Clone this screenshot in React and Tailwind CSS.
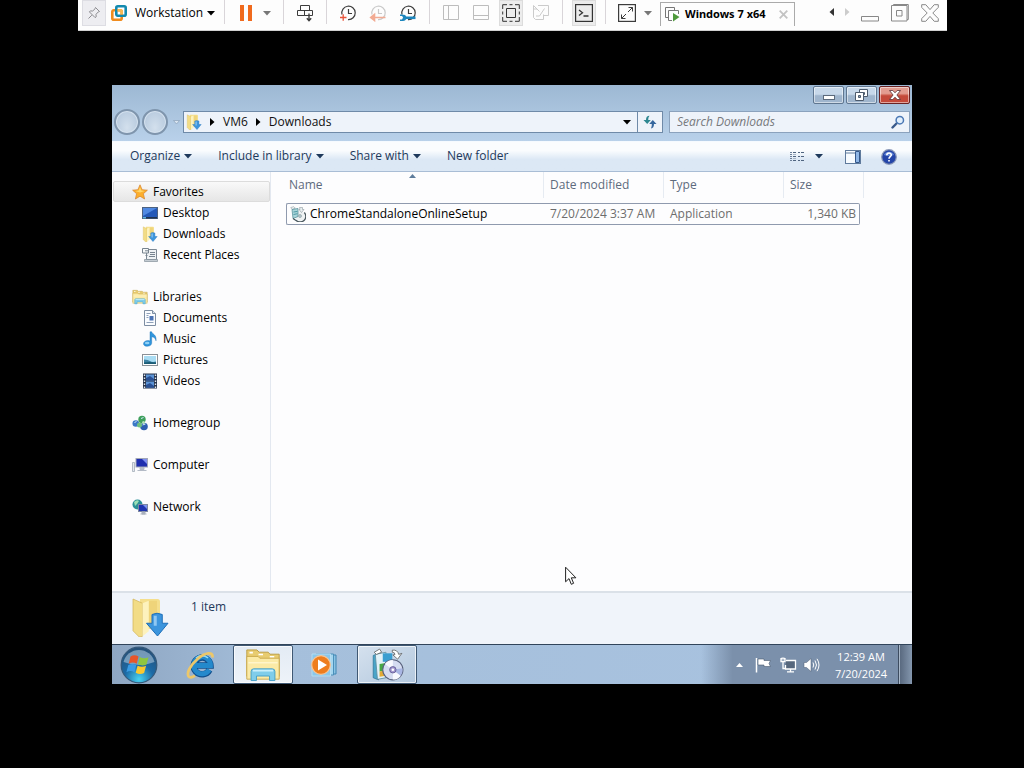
import { useState } from 'react'
import clsx from 'clsx'

const UI_FONT = 'font-["Open_Sans","Noto_Sans",sans-serif]'

function Caret ({ className = 'fill-black' }) {
  return (
    <svg width="8" height="5" viewBox="0 0 8 5" className={clsx('shrink-0', className)} aria-hidden>
      <path d="M0 0h8L4 4.5z" />
    </svg>
  )
}

function RightArrow () {
  return (
    <svg width="5" height="8" viewBox="0 0 5 8" className="shrink-0 fill-black" aria-hidden>
      <path d="M0 0v8l4.5-4z" />
    </svg>
  )
}

/* ---------- host toolbar ---------- */

function Sep () {
  return <span className="mx-1.5 h-6 w-px shrink-0 bg-[#d9d5d9]" />
}

function ToolButton ({ label, active, children }) {
  return (
    <button type="button" aria-label={label} className="flex h-[26px] w-[30px] shrink-0 items-center justify-center">
      <span
        className={clsx(
          'flex h-[26px] w-6 items-center justify-center',
          active && 'border border-[#dcdcdc] bg-[#ececec]'
        )}
      >
        {children}
      </span>
    </button>
  )
}

function LineIcon ({ w = 18, h = 18, stroke = '#3c3c3c', children }) {
  return (
    <svg width={w} height={h} viewBox={`0 0 ${w} ${h}`} fill="none" stroke={stroke} className="shrink-0" aria-hidden>
      {children}
    </svg>
  )
}

function ClockFace ({ stroke }) {
  return (
    <g stroke={stroke}>
      <path d="M3 10.500A6.700 6.700 0 1 1 9 15.600" strokeWidth="1.200" />
      <path d="M9.500 5v4.500H13" strokeWidth="1.200" />
    </g>
  )
}

function HostToolbar () {
  return (
    <header className="mr-[77px] ml-[78px] flex h-[31px] items-start border-b border-[#d0d0d0] bg-[#fdfdfd] pr-0.5 pl-1 text-xs text-black">
      <button type="button" aria-label="Pin toolbar" className="flex h-[26px] w-6 shrink-0 items-center justify-center border border-[#dddde3] bg-[#ededf1]">
        <LineIcon w={14} h={14} stroke="#8c8c90">
          <path d="M8.500 1.500l4 4-1.200.4-2.300 2.400.2 2.500-1.100.8-5.700-5.700.9-1 2.400.1 2.400-2.300zM4.800 9.200L1.500 12.500" />
        </LineIcon>
      </button>
      <button type="button" className="flex h-[26px] w-28 shrink-0 items-center pr-[3px] pl-[5px]">
        <svg width="16" height="16" viewBox="0 0 16 16" fill="none" strokeWidth="2.600" className="mr-2 shrink-0" aria-hidden>
          <rect x="1.300" y="5.300" width="9.400" height="9.400" rx="1.500" stroke="#f08c1e" />
          <rect x="5.300" y="1.300" width="9.400" height="9.400" rx="1.500" stroke="#1289ae" />
          <path d="M6.500 5.300h2.700q1.500 0 1.500 1.500v2.600" stroke="#f7b955" />
        </svg>
        <span>Workstation</span>
        <Caret className="ml-auto fill-black" />
      </button>
      <Sep />
      <ToolButton label="Pause">
        <span className="flex gap-1">
          <span className="h-4 w-1 bg-[#f06a1d]" />
          <span className="h-4 w-1 bg-[#f06a1d]" />
        </span>
      </ToolButton>
      <button type="button" aria-label="Power options" className="flex h-[26px] w-4 shrink-0 items-center pl-0.5">
        <Caret className="fill-[#777]" />
      </button>
      <Sep />
      <ToolButton label="Send Ctrl+Alt+Del">
        <LineIcon>
          <path d="M4.500 1.500h9v5h-9zM1.500 6.500h7v5h-7zM8.500 6.500h8v5h-8z" />
          <path d="M13 9.500v7M10.800 14.200L13 16.600l2.200-2.400" strokeWidth="1.400" />
        </LineIcon>
      </ToolButton>
      <Sep />
      <ToolButton label="Take snapshot">
        <LineIcon>
          <ClockFace stroke="#3c3c3c" />
          <path d="M1 13.500h6.500M4.200 10.200v6.600" stroke="#e8543a" strokeWidth="1.300" />
        </LineIcon>
      </ToolButton>
      <ToolButton label="Revert snapshot">
        <LineIcon>
          <ClockFace stroke="#c9c9c9" />
          <path d="M2 13.500h14.500M5.500 10.500l-3.800 3 3.800 3z" fill="#f2ab93" stroke="#f2ab93" strokeWidth="1.600" />
        </LineIcon>
      </ToolButton>
      <ToolButton label="Manage snapshots">
        <LineIcon>
          <ClockFace stroke="#3c3c3c" />
          <path d="M6 13.800h10.500" stroke="#1d86bd" strokeWidth="2.600" />
          <path d="M1 11.200h2.500l1.500 2.500-1.500 2.500H1M3.500 11.200q3 0 3 2.600t-3 2.400" stroke="#1d86bd" strokeWidth="1.600" />
        </LineIcon>
      </ToolButton>
      <Sep />
      <ToolButton label="Show library">
        <LineIcon stroke="#bdbdbd">
          <path d="M1.500 1.500h15v14h-15zM6.500 1.500v14" />
        </LineIcon>
      </ToolButton>
      <ToolButton label="Show thumbnail bar">
        <LineIcon stroke="#bdbdbd">
          <path d="M1.500 1.500h15v14h-15zM1.500 11.500h15" />
        </LineIcon>
      </ToolButton>
      <ToolButton label="Full screen" active>
        <LineIcon stroke="#333">
          <path d="M4.500 4.500h9v9h-9zM.7 5V.7H5M7.500.7h3M13 .7h4.300V5M17.300 7.500v3M17.300 13v4.300H13M10.500 17.300h-3M5 17.300H.7V13M.7 10.500v-3" />
        </LineIcon>
      </ToolButton>
      <ToolButton label="Unity">
        <LineIcon stroke="#cbcbcb">
          <path d="M6 1.500h10.500v10H12M1.500 5v8.500l2 2h8v-5M1.500 1.500v3.500H5M1.500 1.500l6 6M12.500 4.500L7.500 12H4" />
        </LineIcon>
      </ToolButton>
      <Sep />
      <ToolButton label="Console view" active>
        <LineIcon stroke="#333">
          <rect x="0.600" y="0.600" width="16.800" height="16.800" strokeWidth="1.200" />
          <path d="M4 6l3.500 2.700L4 11.400M8.500 12h5" strokeWidth="1.300" />
        </LineIcon>
      </ToolButton>
      <Sep />
      <ToolButton label="Stretch guest">
        <LineIcon>
          <rect x="0.600" y="0.600" width="16.800" height="16.800" strokeWidth="1.200" />
          <path d="M10 8l4.500-4.500M10.500 3.500h4v4M8 10l-4.500 4.500M3.500 10.500v4h4" />
        </LineIcon>
      </ToolButton>
      <button type="button" aria-label="Stretch options" className="flex h-[26px] w-3 shrink-0 items-center justify-center">
        <Caret className="fill-[#777]" />
      </button>

      <div className="mt-0.5 ml-1.5 flex h-6 w-[135px] shrink-0 items-center border-x border-t border-[#aaa] pl-1">
        <svg width="15" height="15" viewBox="0 0 15 15" fill="none" stroke="#777" className="mr-[5px] shrink-0" aria-hidden>
          <path d="M3 10.500H.5V.5h9V3" />
          <path d="M7 13.500H3.500v-10h10V7" fill="#fff" />
          <path d="M8 6v8.500L14.500 10z" fill="#4f9a3c" stroke="none" />
        </svg>
        <span className="font-['Noto_Sans'] text-[11px] font-bold whitespace-nowrap">Windows 7 x64</span>
        <button type="button" aria-label="Close tab" className="mr-1.5 ml-auto">
          <svg width="9" height="9" viewBox="0 0 9 9" stroke="#c3c3c3" strokeWidth="1.800" aria-hidden>
            <path d="M.7.7l7.600 7.600M8.300.7L.7 8.300" />
          </svg>
        </button>
      </div>

      <div className="ml-auto flex shrink-0">
        <button type="button" aria-label="Previous tab" className="flex h-6 w-4 items-center justify-center">
          <svg width="5" height="8" viewBox="0 0 5 8" fill="#333" aria-hidden><path d="M5 0v8L.5 4z" /></svg>
        </button>
        <button type="button" aria-label="Next tab" className="flex h-6 w-4 items-center justify-center">
          <svg width="5" height="8" viewBox="0 0 5 8" fill="#ccc" aria-hidden><path d="M0 0v8l4.500-4z" /></svg>
        </button>
        <ToolButton label="Minimize">
          <LineIcon stroke="#888"><path d="M.5 12.500h17v4.500H.5z" /></LineIcon>
        </ToolButton>
        <ToolButton label="Restore">
          <LineIcon stroke="#888"><path d="M.5 1.500h15.500v15.500H.5zM2.500 1V.5h14.800V15.500H16M5.500 6.500h5.500v5.500H5.500z" /></LineIcon>
        </ToolButton>
        <ToolButton label="Close">
          <LineIcon stroke="#888">
            <path d="M.7.7h4.100L9 5.600 13.200.7h4.100v2.700L11.800 9l5.500 5.600v2.700h-4.100L9 12.400l-4.200 4.900H.7v-2.700L6.200 9 .7 3.400z" />
          </LineIcon>
        </ToolButton>
      </div>
    </header>
  )
}

/* ---------- icons used inside the guest ---------- */

function DownloadFolderIcon ({ size = 16 }) {
  return (
    <svg width={size} height={size} viewBox="0 0 16 16" className="shrink-0" aria-hidden>
      <path d="M4 .8h7q1 0 1 1v11H4z" fill="#f5df8d" />
      <path d="M7.500 1.500h3.300V12H7.500z" fill="#efd47a" />
      <path d="M1.200.8L5 2.500v13.200L3.700 16 1.200 13.500z" fill="#f2dc86" stroke="#d3b55c" strokeWidth=".3" />
      <path d="M5 2.500l2.500-1v12.200L5 15.700z" fill="#fdf2bd" />
      <path d="M8.800 7q2-1 4.100 0v3.500h2.300L11 15.600 6.600 10.500h2.200z" fill="#3c95dd" stroke="#1f6fb8" strokeWidth=".4" />
      <path d="M9.500 7.500h1.200v4H9.500z" fill="#8fc8f3" />
    </svg>
  )
}

function LibraryIcon ({ size = 16 }) {
  return (
    <svg width={size} height={size} viewBox="0 0 16 16" className="shrink-0" aria-hidden>
      <path d="M.8 3.500V1.300h4.500l1 1h4l.8.900h4.100V13H.8z" fill="#e8cc70" stroke="#b9983c" strokeWidth=".4" />
      <path d="M2 2.500h1.500M6 3.300h2M11 4.300h2" stroke="#fff" strokeWidth=".7" />
      <path d="M.8 4.200h5l.8.800h8.600v9.300H.8z" fill="#fbeaa6" stroke="#c9a94d" strokeWidth=".4" />
      <path d="M1.500 7h13" stroke="#fff6cf" strokeWidth=".6" />
      <path d="M2.700 14.900v-4q0-1.200 1.200-1.200h8.200q1.200 0 1.200 1.200v4h-2.400v-2H5.100v2z" fill="#7fcdea" stroke="#3f9cc4" strokeWidth=".4" />
      <path d="M3.500 10.500h9" stroke="#c9effb" strokeWidth=".8" />
    </svg>
  )
}

function InstallerIcon ({ size = 16 }) {
  return (
    <svg width={size} height={size} viewBox="0 0 32 32" className="shrink-0" aria-hidden>
      <path d="M3 7l5-2v25l-5-2z" fill="#4aa5c9" stroke="#286d8d" strokeWidth=".6" />
      <path d="M5 6l10-2v24l-8 1.500z" fill="#e3f2f8" stroke="#5e8ea1" strokeWidth=".8" />
      <path d="M9 15l6-1v7l-6 1z" fill="#47a845" />
      <path d="M9 22l6-1v5l-6 1z" fill="#e3aa34" />
      <path d="M12 5h9v8h-9z" fill="#3a9ed0" />
      <path d="M21 2q5-.500 6 4l3-1-4 5.500-4.500-4 2-.3Q23.500 4 21 4zM4 4l5-3 2 3-5 2z" fill="#fff" stroke="#555" strokeWidth=".7" />
      <circle cx="21.500" cy="20.500" r="9.500" fill="#d5dcf1" stroke="#59617c" />
      <path d="M21.500 20.500L14 15a9 9 0 0 1 7.500-3.700zM21.500 20.500l7.500 5.500a9 9 0 0 1-7.500 3.700z" fill="#f8f9ff" />
      <path d="M21.500 20.500l9-1.500a9 9 0 0 1-1.500 7z" fill="#a9b6e4" />
      <circle cx="21.500" cy="20.500" r="3" fill="#a599cf" stroke="#5c5792" strokeWidth=".8" />
      <circle cx="21.500" cy="20.500" r="1.200" fill="#fff" />
    </svg>
  )
}

function Svg16 ({ children }) {
  return <svg width="16" height="16" viewBox="0 0 16 16" className="shrink-0" aria-hidden>{children}</svg>
}

// The 16px variant is a simpler drawing: pale disc behind a teal box, dark rim at the lower right
function SmallInstallerIcon () {
  return (
    <Svg16>
      <path d="M.8 1.500l3-.8 1.500 1.500L2 3.500z" fill="#f4f8f9" stroke="#7b8c92" strokeWidth=".5" />
      <circle cx="10" cy="10" r="5" fill="#eef2f3" />
      <path d="M14.300 6.500A5.200 5.200 0 0 1 6 14.200" fill="none" stroke="#4c5a60" strokeWidth="1.300" />
      <path d="M2 3.500l6-1v8l-5 2z" fill="#a9d5da" stroke="#4d8a94" strokeWidth=".7" />
      <path d="M3.500 6l4-.6M3.500 8.500l4-.8" stroke="#4f9aa5" />
      <path d="M3 12.500l3 2" stroke="#3d4f55" strokeWidth="1.200" />
      <path d="M9.500 1.500h3v2h1.500l-2.500 3-2.500-3h1z" fill="#e9eff1" stroke="#7a898f" strokeWidth=".5" />
      <circle cx="10" cy="10" r="1.500" fill="#b7c8cd" stroke="#748990" strokeWidth=".5" />
    </Svg16>
  )
}

const ICONS = {
  star: (
    <Svg16>
      <path d="M8 .8l2.100 4.900 5.300.5-4 3.500 1.200 5.300L8 12.200 3.400 15l1.200-5.300-4-3.500 5.300-.5z" fill="#fcae2c" stroke="#d9822b" strokeWidth=".7" />
      <path d="M8 3l1.300 3.500 3.500.4L8 8.500 3.200 6.900l3.500-.4z" fill="#ffd76b" />
    </Svg16>
  ),
  desktop: (
    <Svg16>
      <rect x=".5" y="2.500" width="15" height="11" fill="#2459b8" stroke="#4d6280" />
      <path d="M1 3h14L1 11z" fill="#5089e2" />
      <path d="M1 12h14v1.500H1z" fill="#20334f" />
      <path d="M1 12h3v1.500H1z" fill="#5fb3dc" />
    </Svg16>
  ),
  downloads: <DownloadFolderIcon />,
  recent: (
    <Svg16>
      <path d="M4.500 2.500h10v10h-10z" fill="#eef1f4" stroke="#7c8894" />
      <path d="M.5 1.500h6v4.500h-6zM3 3.800h3M3.500 8.500h2M8 5.500h5M8 7.500h5M7 9.500h6" stroke="#77838f" fill="#f7f9fa" />
      <path d="M2.500 12.500h13v2h-13z" fill="#c4ccd3" stroke="#84909b" strokeWidth=".7" />
    </Svg16>
  ),
  libraries: <LibraryIcon />,
  documents: (
    <Svg16>
      <path d="M2.500.5h8l3 3v12h-11z" fill="#fafcff" stroke="#7d8da2" />
      <path d="M10.500.5v3h3" fill="#d3deea" stroke="#7d8da2" />
      <path d="M4.500 3.500h4M4.500 5.500h2M4.500 7.500h2M4.500 12.500h7" stroke="#8fa0b8" />
      <path d="M7.500 6h4v4.500h-4z" fill="#4a72b4" />
    </Svg16>
  ),
  music: (
    <Svg16>
      <path d="M8 .8h1.700c.3 2.500 5.200 2.500 4.300 9-.5-2.400-1.600-3.600-4.300-4V12c0 4-7.900 4.400-8.200 1-.2-2.700 3.500-4.200 6.500-3z" fill="#2f95dc" stroke="#1b6fb4" strokeWidth=".4" />
      <ellipse cx="5.200" cy="12" rx="2.300" ry="1.300" fill="#8fd0f6" />
    </Svg16>
  ),
  pictures: (
    <Svg16>
      <rect x=".5" y="2.500" width="15" height="11" fill="#fff" stroke="#8a9096" />
      <path d="M2 4h12v8H2z" fill="#a9dcf3" />
      <path d="M2 7.500q4 0 6 1.500t6 .5V12H2z" fill="#3d82a3" />
      <path d="M2 10.500q6-1 12 0V12H2z" fill="#1c5c75" />
    </Svg16>
  ),
  videos: (
    <Svg16>
      <path d="M1 .5h14v15H1z" fill="#27334a" />
      <path d="M4 1.500h8v6H4zM4 8.500h8v6H4z" fill="#5b93d6" />
      <path d="M4 5l4-2 4 3v1.500H4zM4 12l4-2 4 3v1.500H4z" fill="#294f93" />
      <path d="M2.500 1.500v14M13.500 1.500v14" stroke="#dfe8f2" strokeWidth="1.400" strokeDasharray="1.500 1.500" />
    </Svg16>
  ),
  homegroup: (
    <Svg16>
      <circle cx="3.800" cy="8.500" r="3.300" fill="#3b78c6" />
      <circle cx="10" cy="4.500" r="3.700" fill="#3fa05c" />
      <circle cx="12" cy="11.500" r="3.800" fill="#2d5fb0" />
      <circle cx="7.500" cy="10" r="2.500" fill="#6fc07e" />
      <path d="M2.500 8l2-2M9 3.500l2.500-1M10.500 10l3-1" stroke="#cfe8ff" />
      <circle cx="11.500" cy="7.500" r="1.500" fill="#b3e2b9" />
    </Svg16>
  ),
  computer: (
    <Svg16>
      <path d="M.5 5.500h2v9h-2z" fill="#e4e8ee" stroke="#9aa3b0" strokeWidth=".7" />
      <rect x="4" y="1.500" width="11.500" height="8.500" fill="#1f2fae" stroke="#a2a7b8" />
      <path d="M10 2h5v5z" fill="#7f8ff0" />
      <path d="M8 10.500h4v2H8zM5.500 13.500h9" fill="#b9bfc9" stroke="#b3bac6" />
    </Svg16>
  ),
  network: (
    <Svg16>
      <circle cx="5.500" cy="5.500" r="5" fill="#2a8f97" />
      <path d="M2 3q3-3 5-1L5 5 3 7zM6 7l3-1-1 4z" fill="#9be0b5" />
      <rect x="6.500" y="5.500" width="9" height="7" fill="#1f35b0" stroke="#7c87a2" />
      <path d="M11 6h4v4z" fill="#7c94ef" />
      <path d="M10 13h3v2h-3zM8.500 15h6" fill="#a9b0bd" stroke="#a9b0bd" />
    </Svg16>
  ),
}

/* ---------- explorer window ---------- */

const NAV_GROUPS = [
  {
    title: 'Favorites',
    icon: 'star',
    selected: true,
    items: [
      ['Desktop', 'desktop'],
      ['Downloads', 'downloads'],
      ['Recent Places', 'recent'],
    ],
  },
  {
    title: 'Libraries',
    icon: 'libraries',
    items: [
      ['Documents', 'documents'],
      ['Music', 'music'],
      ['Pictures', 'pictures'],
      ['Videos', 'videos'],
    ],
  },
  { title: 'Homegroup', icon: 'homegroup', items: [] },
  { title: 'Computer', icon: 'computer', items: [] },
  { title: 'Network', icon: 'network', items: [] },
]

const FILES = [
  { name: 'ChromeStandaloneOnlineSetup', date: '7/20/2024 3:37 AM', type: 'Application', size: '1,340 KB' },
]

const CAPTION_BUTTON = 'flex h-[18px] w-[31px] items-center justify-center rounded-[2px] border shadow-[inset_0_0_0_1px_rgba(255,255,255,0.5)]'

function TitleBar () {
  return (
    <div className="flex h-[26px] items-start justify-end gap-0.5 pt-px pr-0.5">
      <button type="button" aria-label="Minimize" className={clsx(CAPTION_BUTTON, 'border-[#5f7690] bg-linear-to-b from-[#c7d8ea] from-45% to-[#9fb5cd] to-55%')}>
        <svg width="12" height="5" viewBox="0 0 12 5" className="mt-1" aria-hidden>
          <rect x=".5" y=".5" width="11" height="4" fill="#fff" stroke="#5c6a7c" />
        </svg>
      </button>
      <button type="button" aria-label="Restore" className={clsx(CAPTION_BUTTON, 'border-[#5f7690] bg-linear-to-b from-[#c7d8ea] from-45% to-[#9fb5cd] to-55%')}>
        <svg width="13" height="12" viewBox="0 0 13 12" fill="#fff" stroke="#4c5a6c" aria-hidden>
          <path d="M4.500.5h8v7h-8z" />
          <path d="M7.500 3.500h2v2h-2z" />
          <path d="M.5 3.500h8v8h-8z" />
          <path d="M3.500 6.500h2v2h-2z" fill="#8fa4ba" />
        </svg>
      </button>
      <button type="button" aria-label="Close" className={clsx(CAPTION_BUTTON, 'border-[#6b2222] bg-linear-to-b from-[#e39c90] from-40% to-[#c4493a] to-55%')}>
        <svg width="12" height="10" viewBox="0 0 12 10" fill="#fff" stroke="#5b3036" strokeWidth=".8" aria-hidden>
          <path d="M.5.5h3.300L6 2.800 8.200.5h3.300L7.900 5l3.600 4.500H8.200L6 7.200 3.800 9.500H.5L4.100 5z" />
        </svg>
      </button>
    </div>
  )
}

function RoundNavButton ({ label }) {
  return (
    <button
      type="button"
      aria-label={label}
      className="size-[26px] shrink-0 rounded-full border-2 border-[#7f95ad] bg-radial-[at_50%_75%] from-[#d3e0ed] to-[#b0c4da] shadow-[inset_0_0_0_1px_#d5e2ef]"
    />
  )
}

function AddressRow () {
  const [query, setQuery] = useState('')

  return (
    <div className="flex items-center pr-0.5 pb-2 pl-0.5">
      <div className="-my-0.5 flex shrink-0 items-center gap-0.5">
        <RoundNavButton label="Back" />
        <RoundNavButton label="Forward" />
        <button type="button" aria-label="Recent pages" className="flex w-[13px] justify-center">
          <svg width="7" height="5" viewBox="0 0 7 5" fill="#d9e5f1" stroke="#8ba1b9" strokeWidth=".7" aria-hidden>
            <path d="M.5.5h6l-3 3.500z" />
          </svg>
        </button>
      </div>

      <nav aria-label="Address" className="flex h-[22px] min-w-0 flex-1 items-center border border-[#6f8aa8] bg-[#eef3fa] pl-0.5 text-[#111]">
        <DownloadFolderIcon />
        <span className="ml-2 flex items-center">
          <RightArrow />
        </span>
        <a href="#vm6" className="mr-2 ml-2">VM6</a>
        <RightArrow />
        <a href="#downloads" className="ml-2">Downloads</a>
        <button type="button" aria-label="Previous locations" className="ml-auto flex h-full w-5 items-center justify-center">
          <Caret />
        </button>
        <button type="button" aria-label="Refresh" className="flex h-full w-[25px] items-center justify-center border-l border-[#6f8aa8]">
          <svg width="14" height="14" viewBox="0 0 14 14" aria-hidden>
            <path d="M6.500.8Q3 .8 3 5H.5l3.700 4L7.800 5H5.200Q5 2.500 6.500.8z" fill="#2d8791" />
            <path d="M8 13.500q3-.5 3-4.500h2.500L9.800 5 6.200 9h2.600q.2 2.500-.8 4.500z" fill="#35679e" />
          </svg>
        </button>
      </nav>

      <form
        role="search"
        onSubmit={e => e.preventDefault()}
        className="ml-1.5 flex h-[22px] w-[241px] shrink-0 items-center border border-[#8ba2bd] bg-[#eef3fa] pr-1 pl-[7px]"
      >
        <input
          type="search"
          aria-label="Search Downloads"
          placeholder="Search Downloads"
          value={query}
          onChange={e => setQuery(e.target.value)}
          className="min-w-0 flex-1 bg-transparent italic outline-none placeholder:text-[#77797d]"
        />
        <button type="submit" aria-label="Search">
          <svg width="14" height="14" viewBox="0 0 14 14" fill="none" aria-hidden>
            <path d="M1.500 12.500l4-4" stroke="#39598a" strokeWidth="2.400" strokeLinecap="round" />
            <circle cx="8.800" cy="5.200" r="3.700" stroke="#4b78b5" strokeWidth="1.500" fill="#e3f0fc" />
          </svg>
        </button>
      </form>
    </div>
  )
}

function CommandBar () {
  return (
    <div className="flex h-[31px] items-center border-y border-t-[#f5faff] border-b-[#a9bdd5] bg-linear-to-b from-[#fafcfe] from-30% to-[#dce8f5] to-60% pr-[15px] pl-[18px] text-[#1e395b]">
      <div className="flex gap-[26px] pb-px">
        <button type="button" className="flex items-center gap-1">Organize <Caret className="fill-[#1e395b]" /></button>
        <button type="button" className="flex items-center gap-1">Include in library <Caret className="fill-[#1e395b]" /></button>
        <button type="button" className="flex items-center gap-1">Share with <Caret className="fill-[#1e395b]" /></button>
        <button type="button">New folder</button>
      </div>
      <button type="button" aria-label="Change your view" className="ml-auto">
        <svg width="16" height="12" viewBox="0 0 16 12" fill="none" aria-hidden>
          <path d="M1 1.500h2M1 3.500h2M1 5.500h2M1 7.500h2M1 9.500h2" stroke="#6c7f98" />
          <path d="M4 1.500h3M4 5.500h3M4 9.500h3M9 1.500h2M12 1.500h3M9 5.500h2M12 5.500h3M9 9.500h2M12 9.500h3" stroke="#4f6480" />
          <path d="M4 3.500h3M4 7.500h3" stroke="#a7b5c6" />
        </svg>
      </button>
      <button type="button" aria-label="More view options" className="ml-2.5">
        <Caret className="fill-[#1e395b]" />
      </button>
      <button type="button" aria-label="Show the preview pane" className="ml-[22px]">
        <svg width="16" height="14" viewBox="0 0 16 14" aria-hidden>
          <rect x=".5" y=".5" width="15" height="13" fill="#f7fbff" stroke="#5f7a9c" />
          <path d="M1 3h14" stroke="#5f7a9c" />
          <path d="M10.500 1.500h4v11h-4z" fill="#8fb6e6" stroke="#35588a" />
        </svg>
      </button>
      <button type="button" aria-label="Get help" className="ml-5">
        <svg width="16" height="16" viewBox="0 0 16 16" aria-hidden>
          <circle cx="8" cy="8" r="7.300" fill="#2445a8" stroke="#8b99b8" strokeWidth="1.200" />
          <path d="M3 6a5.500 5.500 0 0 1 10 0q-5 2-10 0z" fill="#6287d6" />
          <path d="M5.800 6.300C5.800 3.200 10.400 3.400 10.300 6 10.200 7.600 8 7.700 8 9.700M8 11v1.600" fill="none" stroke="#fff" strokeWidth="1.600" />
        </svg>
      </button>
    </div>
  )
}

function NavPane () {
  return (
    <nav aria-label="Folders" className="flex w-[159px] shrink-0 flex-col gap-[21px] border-r border-[#e3e8f0] bg-[#fcfcfd] pt-[9px] text-black">
      {NAV_GROUPS.map(group => (
        <div key={group.title}>
          <a
            href={`#${group.title}`}
            className={clsx(
              'ml-px flex h-[21px] items-center gap-[5px] border pl-[18px]',
              group.selected
                ? 'rounded-[2px] border-[#dcdcdc] bg-linear-to-b from-[#f9f9f9] to-[#e6e6e6]'
                : 'border-transparent'
            )}
          >
            {ICONS[group.icon]}
            {group.title}
          </a>
          {group.items.map(([label, icon]) => (
            <a key={label} href={`#${label}`} className="flex h-[21px] items-center gap-[5px] pl-[30px]">
              {ICONS[icon]}
              {label}
            </a>
          ))}
        </div>
      ))}
    </nav>
  )
}

function FileList () {
  const head = 'h-[26px] border-r border-[#e6ebf2] pl-1.5 text-left font-normal'
  const cell = 'h-[22px] border-y border-[#8f9aae] px-1.5'

  return (
    <section className="min-w-0 flex-1 bg-[#fdfdfe] pl-[15px]">
      <table className="table-fixed border-separate border-spacing-0 text-[#6d6d6d]">
        <colgroup>
          <col className="w-[258px]" />
          <col className="w-[120px]" />
          <col className="w-[120px]" />
          <col className="w-[76px]" />
          <col className="w-1" />
        </colgroup>
        <thead className="text-[#5d6b7d]">
          <tr>
            <th scope="col" aria-sort="ascending" className="relative h-[26px] border-r border-[#e6ebf2] pl-[3px] text-left font-normal">
              Name
              <svg width="7" height="4" viewBox="0 0 7 4" className="absolute top-0.5 left-1/2 -ml-1.5 fill-[#5f7d9c]" aria-hidden>
                <path d="M3.500 0L7 4H0z" />
              </svg>
            </th>
            <th scope="col" className={head}>Date modified</th>
            <th scope="col" className={head}>Type</th>
            <th scope="col" colSpan={2} className={head}>Size</th>
          </tr>
          <tr className="h-[5px]" aria-hidden />
        </thead>
        <tbody>
          {FILES.map(file => (
            <tr key={file.name}>
              <td className="h-[22px] rounded-l-[2px] border-y border-l border-[#8f9aae] pl-[3px] text-black">
                <span className="flex items-center gap-1">
                  <SmallInstallerIcon />
                  {file.name}
                </span>
              </td>
              <td className={cell}>{file.date}</td>
              <td className={cell}>{file.type}</td>
              <td className="h-[22px] rounded-r-[2px] border-y border-r border-[#8f9aae] pr-[3px] text-right">{file.size}</td>
            </tr>
          ))}
        </tbody>
      </table>
    </section>
  )
}

function ExplorerWindow () {
  return (
    <section className="flex flex-1 flex-col">
      <div className="bg-linear-to-b from-[#9db8d3] to-[#b9d1ea]">
        <TitleBar />
        <AddressRow />
      </div>
      <CommandBar />
      <div className="flex flex-1">
        <NavPane />
        <FileList />
      </div>
      <footer className="flex h-[53px] items-start border-t-2 border-[#dbe1e8] bg-[#f0f4fa] pl-[18px] text-[#1e395b]">
        <span className="mt-1">
          <DownloadFolderIcon size={40} />
        </span>
        <span className="mt-1.5 ml-[21px]">1 item</span>
      </footer>
    </section>
  )
}

/* ---------- taskbar ---------- */

function TaskButton ({ label, open, children }) {
  return (
    <button
      type="button"
      aria-label={label}
      className={clsx(
        'flex h-full w-[60px] shrink-0 items-center justify-center',
        open && 'rounded-[2px] border border-[#3f5873] shadow-[inset_0_0_0_1px_rgba(255,255,255,0.7)]',
        open === 'active' && 'bg-linear-to-b from-[#e3ebf4] to-[#eef3f9]',
        open === 'idle' && 'bg-linear-to-br from-[#d5e1ee] to-[#b3c8de]'
      )}
    >
      {children}
    </button>
  )
}

function Taskbar () {
  return (
    <footer className="flex h-10 items-stretch gap-0.5 border-t border-[#31445a] bg-linear-to-r from-[#8ea6c2] via-[#a5bfdb] via-20% to-[#a9c3e0] text-white">
      <button type="button" aria-label="Start" className="flex w-[57px] shrink-0 items-center justify-center pr-1">
        <svg width="38" height="38" viewBox="0 0 38 38" aria-hidden>
          <defs>
            <radialGradient id="orb" cx="50%" cy="90%" r="90%">
              <stop offset="0" stopColor="#47d3f1" />
              <stop offset=".45" stopColor="#1c6aa6" />
              <stop offset="1" stopColor="#274e74" />
            </radialGradient>
          </defs>
          <circle cx="19" cy="19" r="17.800" fill="url(#orb)" stroke="#35597a" strokeWidth="1.200" />
          <path d="M3.500 16a16 16 0 0 1 31 0q-15 6-31 0z" fill="#b9d0e2" opacity=".55" />
          <path d="M10.500 10.500q4-2.500 8 0l-1.800 7.200q-4-2.200-8 0z" fill="#e8552a" />
          <path d="M19.800 11q4.200 2.500 8.700.2l-2 7.300q-4.200 2-8.500-.2z" fill="#8fc640" />
          <path d="M8.300 19q4-2.200 8 0l-1.900 7.200q-4-2.300-8 0z" fill="#3a9be4" />
          <path d="M17.600 19.700q4.200 2.200 8.500.1l-2 7.200q-4.200 2.200-8.400-.2z" fill="#fbc92f" />
        </svg>
      </button>
      <TaskButton label="Internet Explorer">
        <svg width="32" height="32" viewBox="0 0 32 32" fill="none" aria-hidden>
          <path d="M24.500 21A8.400 8.400 0 1 1 25.500 16.500H10" stroke="#124f8c" strokeWidth="6.400" />
          <path d="M24.300 20.700A8.400 8.400 0 1 1 25.500 16.500H10" stroke="#2489cc" strokeWidth="4.800" />
          <path d="M11 9a9 9 0 0 1 12 0" stroke="#8fdcf8" strokeWidth="1.500" />
          <path d="M27.500 8.500C28.500 2 20 3.500 12.500 10 5 16.500 1.500 24 3.500 27.200c1.200 1.800 4 1.200 6.500-.5" stroke="#ecc76a" strokeWidth="2.800" />
        </svg>
      </TaskButton>
      <TaskButton label="Windows Explorer" open="active"><LibraryIcon size={36} /></TaskButton>
      <TaskButton label="Windows Media Player">
        <svg width="28" height="28" viewBox="0 0 28 28" className="mr-0.5" aria-hidden>
          <path d="M10 4h16v19H10z" fill="#8bc3e4" stroke="#3f86b3" />
          <path d="M6 3h17.500v21H6z" fill="#a5d6ef" stroke="#4b90ba" />
          <path d="M2 3h18.500v22H2z" fill="#8ac7ea" stroke="#b4dcf1" />
          <circle cx="11" cy="14" r="9.300" fill="#ee7d1d" stroke="#f9c493" strokeWidth="1.200" />
          <path d="M8 8.500v11l9-5.500z" fill="#fff" />
        </svg>
      </TaskButton>
      <TaskButton label="Setup" open="idle"><InstallerIcon size={34} /></TaskButton>

      <div className="ml-auto flex items-center bg-linear-to-r from-transparent to-[#7b90ab] to-15%">
        <button type="button" aria-label="Show hidden icons" className="ml-8 flex w-3 justify-center">
          <svg width="7" height="4" viewBox="0 0 7 4" fill="#fff" aria-hidden><path d="M3.500 0L7 4H0z" /></svg>
        </button>
        <svg width="17" height="16" viewBox="0 0 17 16" className="ml-2.5" aria-hidden>
          <path d="M1.500 1v14.500" stroke="#fff" strokeWidth="1.500" />
          <path d="M3 2h6v1.500h6.500l-1.500 3 1.500 3H9V8H3z" fill="#fff" stroke="#4a5a70" strokeWidth=".6" />
        </svg>
        <svg width="17" height="16" viewBox="0 0 17 16" fill="none" stroke="#fff" strokeWidth="1.300" className="ml-2" aria-hidden>
          <path d="M6 3.500h9.500v8.500h-10V8M10.500 12v2.500M7 14.800h7" fill="#56677d" />
          <path d="M1 1v3.500h4V1M3 4.500v7h2.500M2.200.5v2M3.800.5v2" />
        </svg>
        <svg width="17" height="16" viewBox="0 0 17 16" fill="none" stroke="#fff" className="ml-1.5" aria-hidden>
          <path d="M1 5.500h2.500L8 1.500v13l-4.500-4H1z" fill="#fff" stroke="#4a5a70" strokeWidth=".5" />
          <path d="M10 5.500q1.500 2.500 0 5M12 3.500q3 4.500 0 9M14 1.800q4 6.200 0 12.400" />
        </svg>
        <div className="mr-2 ml-3 flex w-[58px] flex-col text-center text-[11px] leading-[17px]">
          <time>12:39 AM</time>
          <time>7/20/2024</time>
        </div>
        <button type="button" aria-label="Show desktop" className="w-3.5 self-stretch border-l border-[#3d4c60] bg-linear-to-r from-[#56667c] to-[#8497ae] shadow-[inset_1px_0_0_#a9b8c9]" />
      </div>
    </footer>
  )
}

function Cursor () {
  return (
    <svg width="12" height="20" viewBox="0 0 12 20" className="pointer-events-none absolute top-[481px] left-[453px]" aria-hidden>
      <path d="M.6 1.200v14.600l3.400-3.200 2.300 5.700 2.300-1-2.300-5.500h4.600z" fill="#fff" stroke="#222" />
    </svg>
  )
}

export default function App () {
  return (
    <div className={clsx('flex min-h-screen flex-col bg-black text-xs', UI_FONT)}>
      <HostToolbar />
      <main className="relative mx-28 mt-[54px] mb-[84px] flex flex-1 flex-col">
        <ExplorerWindow />
        <Taskbar />
        <Cursor />
      </main>
    </div>
  )
}
